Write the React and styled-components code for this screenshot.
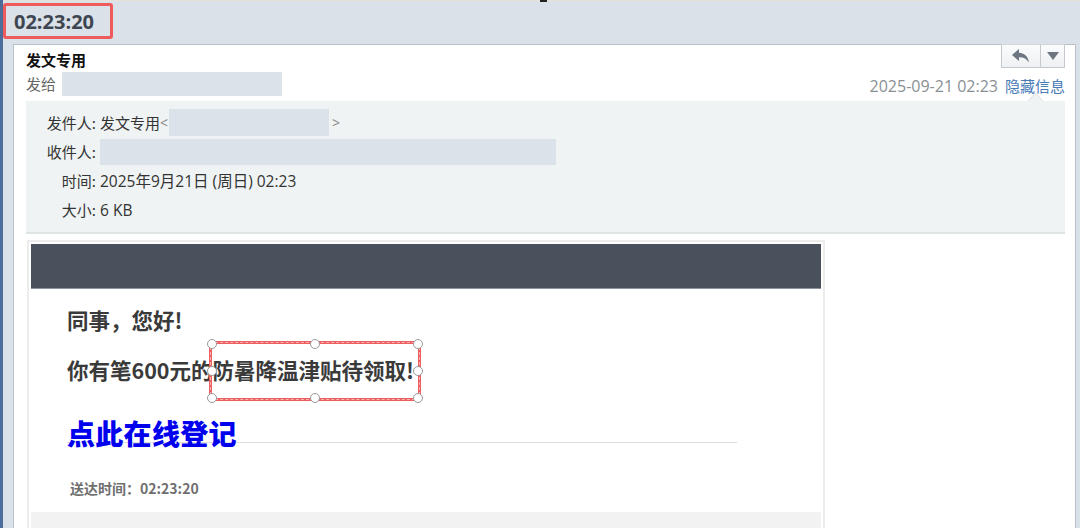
import React from "react";
import styled, { createGlobalStyle } from "styled-components";

const Global = createGlobalStyle`
  html, body { margin: 0; padding: 0; height: 100%; overflow: hidden; }
  body {
    background: #dbe1e8;
    font-family: "Open Sans", "Noto Sans CJK SC", sans-serif;
    color: #333;
  }
`;

const Root = styled.div`
  height: 528px;
  border-left: 3px solid #4c6d99;
  box-sizing: border-box;
  display: flex;
  flex-direction: column;
  overflow: hidden;
`;

const TopStrip = styled.div`
  flex-shrink: 0;
  height: 1px;
  background: #e6e1d4;
  display: flex;
`;

const TopMark = styled.span`
  width: 7px;
  height: 2px;
  margin-left: 537px;
  background: #222;
`;

const TopBar = styled.div`
  flex-shrink: 0;
  height: 43px;
  display: flex;
  align-items: flex-start;
`;

const TimeBadge = styled.div`
  margin-top: 2px;
  width: 110px;
  height: 36px;
  box-sizing: border-box;
  border: 3px solid #ef5a5a;
  border-radius: 3px;
  padding-left: 8px;
  display: flex;
  align-items: center;
  font-family: "Open Sans", sans-serif;
  font-weight: 700;
  font-size: 20px;
  color: #3d4651;
`;

const Panel = styled.div`
  margin-left: 10px;
  width: 1063px;
  flex: 1;
  min-height: 0;
  box-sizing: border-box;
  background: #fff;
  border: 1px solid #b8bfc7;
  border-bottom: none;
  padding: 0 10px 0 12px;
  display: flex;
  flex-direction: column;
`;

const HeadRow = styled.div`
  flex-shrink: 0;
  display: flex;
  justify-content: space-between;
  align-items: ${(p) => p.$align || "center"};
  height: ${(p) => p.$h}px;
  font-size: 15px;
  line-height: 20px;
`;

const Title = styled.div`
  font-weight: 700;
  color: #111;
  padding-top: 5px;
  font-family: "Noto Sans CJK SC", sans-serif;
  font-size: 15px;
`;

const BtnGroup = styled.div`
  display: flex;
  margin-top: -1px;
  border: 1px solid #c5cad0;
  border-top-color: #d3d7dc;
  height: 24px;
  box-sizing: border-box;
`;

const IconBtn = styled.div`
  width: ${(p) => p.$w}px;
  height: 100%;
  display: flex;
  align-items: center;
  justify-content: center;
  background: linear-gradient(#fbfbfc, #eef0f2);
  & + & { border-left: 1px solid #c5cad0; }
`;

const Sender = styled.div`
  display: flex;
  align-items: center;
  color: #666;
  font-family: "Noto Sans CJK SC", sans-serif;
  font-size: 15px;
`;

const Blur = styled.span`
  display: inline-block;
  flex-shrink: 0;
  width: ${(p) => p.$w}px;
  height: ${(p) => p.$h || 24}px;
  background: #dce2e9;
  margin-left: ${(p) => p.$ml || 0}px;
`;

const Meta = styled.div`
  display: flex;
  align-items: center;
  gap: 7px;
  padding-top: 4px;
`;

const DateText = styled.span`
  color: #8a8f94;
  font-size: 16px;
`;

const HideLink = styled.span`
  color: #4a7bb7;
  font-family: "Noto Sans CJK SC", sans-serif;
  font-size: 15px;
`;

const Details = styled.div`
  flex-shrink: 0;
  position: relative;
  margin-top: 5px;
  background: #eff3f3;
  border-bottom: 2px solid #dfe4e4;
  padding: 7px 0 8px 20px;
  display: grid;
  grid-template-columns: 50px 1fr;
  grid-auto-rows: 29px;
  column-gap: 4px;
  font-size: 15px;
  color: #333;
  &::before {
    content: "";
    position: absolute;
    right: 24px;
    top: -6px;
    width: 10px;
    height: 10px;
    background: #eff3f3;
    border-left: 1px solid #e2e6e6;
    border-top: 1px solid #e2e6e6;
    transform: rotate(45deg);
  }
`;

const Label = styled.div`
  white-space: nowrap;
  display: flex;
  align-items: center;
  justify-content: flex-end;
  font-family: "Noto Sans CJK SC", sans-serif;
  font-size: 15px;
`;

const Value = styled.div`
  display: flex;
  align-items: center;
  white-space: nowrap;
  font-size: 15.5px;
`;

const Cjk = styled.span`
  font-family: "Noto Sans CJK SC", sans-serif;
  font-size: 15px;
`;

const Bracket = styled.span`
  color: #888;
  font-size: 14px;
  margin-left: ${(p) => p.$ml || 0}px;
`;

const Frame = styled.div`
  margin-top: 6px;
  margin-left: 1px;
  width: 798px;
  box-sizing: border-box;
  border: 2px solid #ececec;
  border-bottom: none;
  padding: 2px 2px 0;
  flex: 1;
  display: flex;
  flex-direction: column;
`;

const DarkBar = styled.div`
  flex-shrink: 0;
  height: 44px;
  background: #4a505c;
  border-bottom: 1px solid #8d939c;
`;

const Body = styled.div`
  flex-shrink: 0;
  padding: 16px 0 0 36px;
  font-family: "Noto Sans CJK SC", sans-serif;
  font-weight: 700;
  color: #3a3a3a;
`;

const Line = styled.div`
  font-size: 21.5px;
  line-height: 30px;
  margin-bottom: ${(p) => p.$mb || 0}px;
  white-space: nowrap;
`;

const Selected = styled.span`
  position: relative;
`;

const SelBox = styled.span`
  position: absolute;
  left: -4px;
  right: -7px;
  top: -13px;
  bottom: -16px;
  border: 3px solid #ef5e5e;
  box-sizing: border-box;
  &::after {
    content: "";
    position: absolute;
    inset: -2px;
    border: 1px dashed rgba(255, 255, 255, 0.55);
  }
`;

const Handle = styled.span`
  position: absolute;
  width: 8px;
  height: 8px;
  border-radius: 50%;
  background: #fff;
  border: 1px solid #9a9a9a;
  left: ${(p) => p.$x};
  top: ${(p) => p.$y};
  transform: translate(-50%, -50%);
  z-index: 1;
`;

const LinkRow = styled.div`
  margin-top: 30px;
  width: 670px;
  height: 27px;
  border-bottom: 1px solid #dedede;
  overflow: visible;
`;

const RegLink = styled.a`
  display: block;
  font-size: 28px;
  line-height: 36px;
  color: #0000ee;
  text-decoration: none;
  font-weight: 900;
  letter-spacing: 0.3px;
`;

const Delivered = styled.div`
  margin-top: 35px;
  margin-left: 3px;
  font-size: 14px;
  line-height: 20px;
  color: #6f6f6f;
`;

const Footer = styled.div`
  margin-top: 14px;
  height: 40px;
  flex-shrink: 0;
  background: #f2f2f2;
`;

const handles = [
  ["0%", "0%"], ["50%", "0%"], ["100%", "0%"],
  ["0%", "50%"], ["100%", "50%"],
  ["0%", "100%"], ["50%", "100%"], ["100%", "100%"],
];

export default function App() {
  return (
    <>
      <Global />
      <Root>
        <TopStrip><TopMark /></TopStrip>
        <TopBar>
          <TimeBadge>02:23:20</TimeBadge>
        </TopBar>
        <Panel>
          <HeadRow $h={27} $align="flex-start">
            <Title>发文专用</Title>
            <BtnGroup>
              <IconBtn $w={38}>
                <svg width="18" height="14" viewBox="0 0 18 14">
                  <path d="M7 0 L0 6 L7 12 L7 8.2 C11.5 8 14.5 9.5 17 13.5 C16.2 8 13 4.3 7 3.8 Z" fill="#6d7580" />
                </svg>
              </IconBtn>
              <IconBtn $w={23}>
                <svg width="12" height="8" viewBox="0 0 12 8">
                  <path d="M0 0 H12 L6 8 Z" fill="#6d7580" />
                </svg>
              </IconBtn>
            </BtnGroup>
          </HeadRow>
          <HeadRow $h={24}>
            <Sender>
              发给 <Blur $w={220} $ml={6} />
            </Sender>
            <Meta>
              <DateText>2025-09-21 02:23</DateText>
              <HideLink>隐藏信息</HideLink>
            </Meta>
          </HeadRow>
          <Details>
            <Label>发件人:</Label>
            <Value>
              <Cjk>发文专用</Cjk>
              <Bracket>&lt;</Bracket>
              <Blur $w={160} $h={27} $ml={1} />
              <Bracket $ml={3}>&gt;</Bracket>
            </Value>
            <Label>收件人:</Label>
            <Value>
              <Blur $w={456} $h={26} />
            </Value>
            <Label>时间:</Label>
            <Value>2025年9月21日 (周日) 02:23</Value>
            <Label>大小:</Label>
            <Value>6 KB</Value>
          </Details>
          <Frame>
            <DarkBar />
            <Body>
              <Line $mb={20}>同事，您好!</Line>
              <Line>
                你有笔600元的
                <Selected>
                  防暑降温津贴待领取!
                  <SelBox>
                    {handles.map(([x, y], i) => (
                      <Handle key={i} $x={x} $y={y} />
                    ))}
                  </SelBox>
                </Selected>
              </Line>
              <LinkRow>
                <RegLink href="#">点此在线登记</RegLink>
              </LinkRow>
              <Delivered>送达时间：02:23:20</Delivered>
            </Body>
            <Footer />
          </Frame>
        </Panel>
      </Root>
    </>
  );
}
